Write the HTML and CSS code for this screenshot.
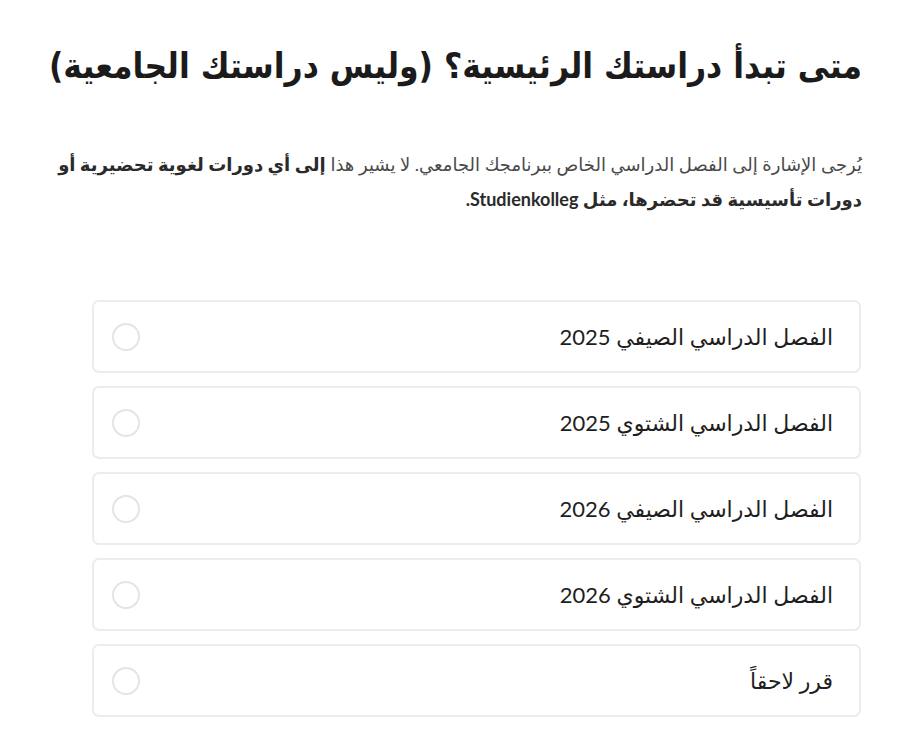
FILE: index.html
```html
<!DOCTYPE html>
<html lang="ar" dir="rtl">
<head>
<meta charset="utf-8">
<link rel="stylesheet" href="styles.css">
</head>
<body>
<div class="page">
  <h1 class="title">متى تبدأ دراستك الرئيسية؟ (وليس دراستك الجامعية)</h1>
  <p class="desc">يُرجى الإشارة إلى الفصل الدراسي الخاص ببرنامجك الجامعي. لا يشير هذا <b>إلى أي دورات لغوية تحضيرية أو دورات تأسيسية قد تحضرها، مثل Studienkolleg.</b></p>
  <div class="options">
    <label class="option"><span class="opt-text">الفصل الدراسي الصيفي 2025</span><span class="radio"></span></label>
    <label class="option"><span class="opt-text">الفصل الدراسي الشتوي 2025</span><span class="radio"></span></label>
    <label class="option"><span class="opt-text">الفصل الدراسي الصيفي 2026</span><span class="radio"></span></label>
    <label class="option"><span class="opt-text">الفصل الدراسي الشتوي 2026</span><span class="radio"></span></label>
    <label class="option"><span class="opt-text">قرر لاحقاً</span><span class="radio"></span></label>
  </div>
</div>
</body>
</html>
```
FILE: styles.css
```css
html, body {
  margin: 0;
  padding: 0;
  background: #ffffff;
}
body {
  font-family: Lato, "Liberation Sans", "DejaVu Sans", sans-serif;
  color: #222;
}
.page {
  width: 900px;
  box-sizing: border-box;
  padding: 30px 38px 0 38px;
}
.title {
  margin: 0;
  font-family: "DejaVu Sans Condensed", "DejaVu Sans", sans-serif;
  font-size: 35px;
  font-weight: 700;
  color: #1b1b1b;
  line-height: 72px;
  text-align: right;
  white-space: nowrap;
}
.desc {
  margin: 45px 0 0 0;
  font-size: 18px;
  line-height: 35px;
  color: #4a4a4a;
}
.desc b {
  font-weight: 700;
  color: #2a2a2a;
}
.options {
  margin: 83px 1px 0 54px;
  display: flex;
  flex-direction: column;
  gap: 13px;
}
.option {
  height: 73px;
  box-sizing: border-box;
  border: 2px solid #ececec;
  border-radius: 7px;
  display: flex;
  align-items: center;
  justify-content: space-between;
  padding: 0 26px 0 18px;
}
.opt-text {
  font-size: 22px;
  color: #1e1e1e;
}
.radio {
  width: 28px;
  height: 28px;
  border: 2px solid #e4e4e4;
  border-radius: 50%;
  box-sizing: border-box;
}
```
